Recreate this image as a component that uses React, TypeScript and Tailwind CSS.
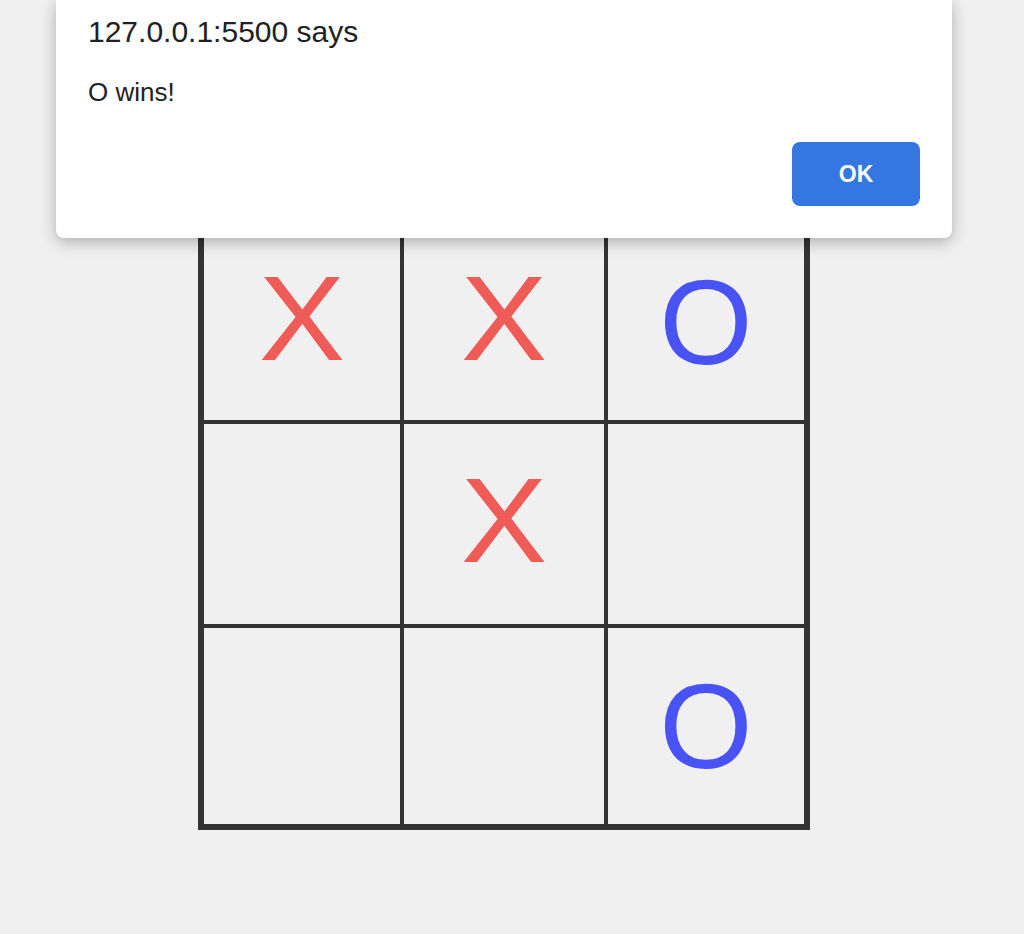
import React from 'react';

type Mark = 'X' | 'O' | null;

const board: Mark[] = ['X', 'X', 'O', null, 'X', null, null, null, 'O'];

export default function App() {
  return (
    <div
      className="relative min-h-[934px] w-full bg-[#f0f0f0] overflow-hidden"
      style={{ fontFamily: '"Liberation Sans", Arial, sans-serif' }}
    >
      {/* 게임판 */}
      <div className="flex justify-center pr-[16px] pt-[218px]">
        <div className="grid grid-cols-[196px_200px_196px] grid-rows-[196px_200px_196px] gap-[4px] bg-[#333333] p-[6px]">
          {board.map((m, i) => (
            <div key={i} className="flex items-center justify-center bg-[#f0f0f0]">
              {m && (
                <span
                  className={[
                    'text-[120px] leading-[120px]',
                    m === 'X' ? 'text-[#ef5b57] -translate-y-[4px] scale-x-[1.08]' : 'text-[#4953f5]',
                  ].join(' ')}
                >
                  {m}
                </span>
              )}
            </div>
          ))}
        </div>
      </div>

      {/* alert 대화상자 */}
      <div className="absolute left-[56px] top-0 w-[896px] rounded-b-[8px] bg-white px-[32px] pt-[15px] pb-[32px] shadow-[0_4px_16px_rgba(0,0,0,0.28)]">
        <div className="text-[30px] leading-[34px] text-[#202124]">127.0.0.1:5500 says</div>
        <div className="mt-[27px] text-[26px] leading-[32px] text-[#202124]">O wins!</div>
        <div className="mt-[34px] flex justify-end">
          <button className="h-[64px] w-[128px] rounded-[8px] bg-[#3477e0] text-[23px] font-bold text-white">
            OK
          </button>
        </div>
      </div>
    </div>
  );
}
